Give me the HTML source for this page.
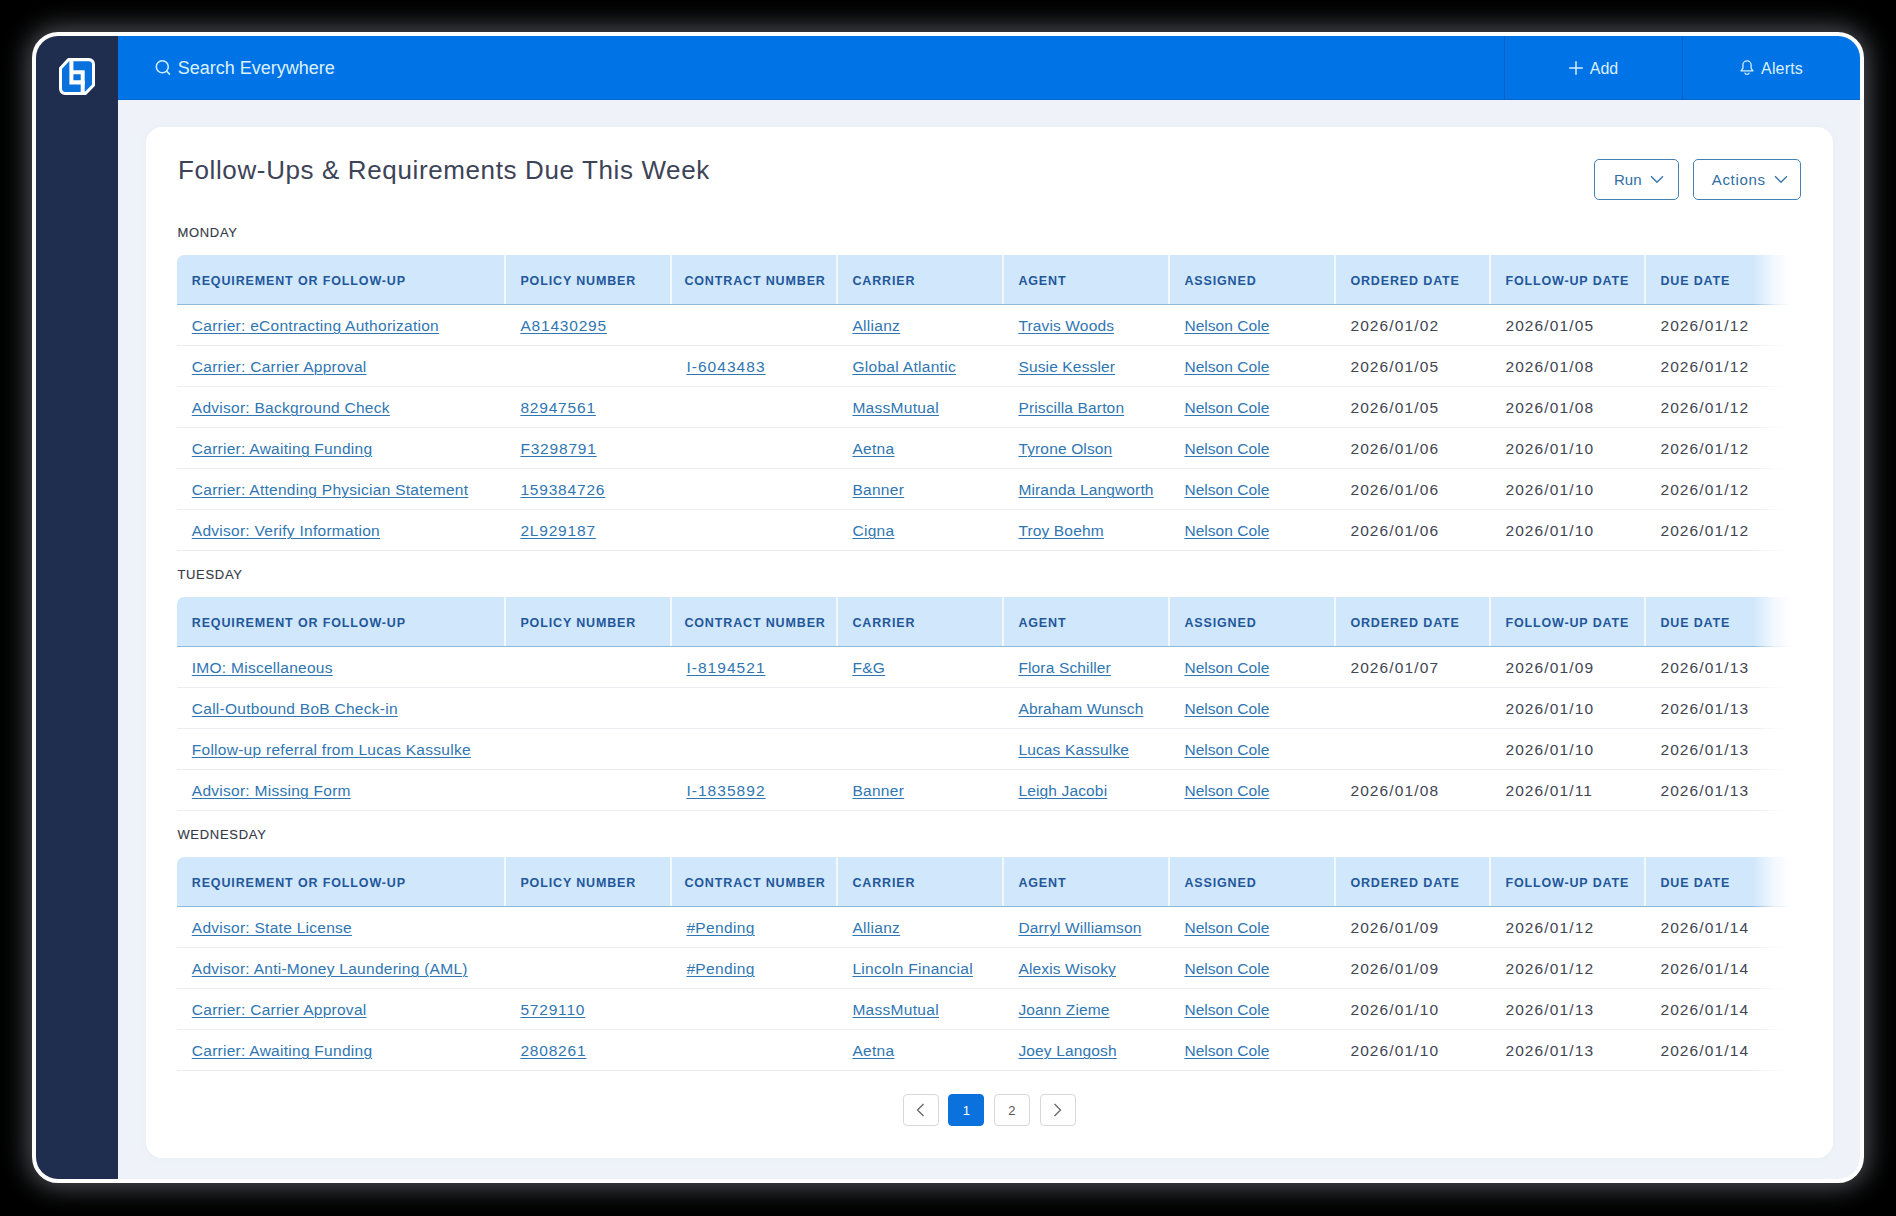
<!DOCTYPE html>
<html lang="en"><head><meta charset="utf-8"><title>Follow-Ups &amp; Requirements Due This Week</title>
<style>
*{box-sizing:border-box;margin:0;padding:0}
html,body{width:1896px;height:1216px;background:#000;overflow:hidden}
body{font-family:"Liberation Sans",sans-serif;position:relative;color:#3b4250}
.frame{position:absolute;left:32px;top:32px;width:1832px;height:1151px;border:4px solid #fff;border-radius:26px;background:#eff3f9;overflow:hidden;}
.glow{position:absolute;left:32px;top:32px;width:1832px;height:1151px;border-radius:26px;box-shadow:0 0 26px 4px rgba(152,160,172,0.52);}
.side{position:absolute;left:0;top:0;width:82px;height:100%;background:#1f2d4e}
.logo{position:absolute;left:21px;top:20.4px;width:40px;height:41px}
.top{position:absolute;left:82px;top:0;right:0;height:63.5px;background:#0073e6;color:#e6f2ff;border-bottom:1.5px solid #0067d0}
.search{position:absolute;left:36.5px;top:0;height:64px;display:flex;align-items:center;font-size:18px;color:#dcf1ff}
.search svg{margin-right:6.3px;position:relative;top:-1px}
.tbtn{position:absolute;top:0;height:64px;border-left:1px solid #0a62c4;display:flex;align-items:center;justify-content:center;font-size:16px;padding-top:1.5px;color:#dcf1ff}
.tbtn svg{margin-right:7px;position:relative;top:-1.2px}
.card{position:absolute;left:110px;top:91px;width:1687px;height:1031px;background:#fff;border-radius:16px;box-shadow:0 0 10px rgba(120,140,180,0.06)}
h1{position:absolute;left:32px;top:24.7px;font-size:26px;letter-spacing:0.62px;font-weight:400;color:#3d4457;line-height:36px;white-space:nowrap}
.btn{position:absolute;top:32px;height:41px;border:1.5px solid #4482b3;border-radius:5px;color:#2f6ea5;font-size:15px;display:flex;align-items:center;justify-content:center;background:#fff}
.btn svg{margin-left:8px}
.btn.b2{letter-spacing:0.7px;padding-left:5.5px}.btn.b1{padding-left:4.5px}
.content{position:absolute;left:31.4px;top:91px;width:1625px}
.day{font-size:13px;letter-spacing:0.7px;color:#343a46;height:46px;line-height:46px;font-weight:400;-webkit-text-stroke:0.12px #343a46;padding-top:0.5px}
.day:first-child{height:37px;line-height:28px}
.tbl{position:relative;width:1625px}
.thead{display:flex;height:50px;background:#d1e7fc;border-bottom:1.5px solid #93b9d9;border-radius:7px 0 0 0;overflow:hidden}
.th{height:100%;display:flex;align-items:center;padding-left:14px;padding-top:3.4px;font-size:12.5px;font-weight:700;letter-spacing:0.86px;color:#22579a;border-left:2px solid #f2f8fe;white-space:nowrap}
.th:first-child{border-left:none;padding-left:14.4px}
.tr{display:flex;height:41px;border-bottom:1px solid #ebedf0}
.td{height:100%;display:flex;align-items:center;padding-left:16px;padding-top:2.5px;font-size:15.5px;color:#3f4552;white-space:nowrap}
.td:first-child{padding-left:14.4px}
.th:first-child{padding-left:14.4px}
.td a{color:#2f76b3;text-decoration:underline;text-underline-offset:2.2px;text-decoration-thickness:1.1px}
.c1{width:327px}.c2,.c3,.c4,.c5,.c6{width:166px}.c7,.c8{width:155px}.c9{width:158px}
.fade{position:absolute;right:0;top:0;bottom:-2px;width:49px;background:linear-gradient(to right,rgba(255,255,255,0),rgba(255,255,255,0.75) 22px,#fff 38px)}
.pager{position:absolute;left:0;right:0;top:967px;height:33px;display:flex;justify-content:center;gap:9.670px;padding-right:0.800px}
.pg{width:36px;height:32px;border:1px solid #d6d8dc;border-radius:4px;display:flex;align-items:center;justify-content:center;font-size:13px;color:#555;background:#fff}
.pg.on{background:#0b72dd;border-color:#0b72dd;color:#fff}

.th.c3{padding-left:12px}
.td.c1{letter-spacing:0.27px}.td.c2{letter-spacing:0.81px}.td.c3{letter-spacing:1.04px}.td.c4{letter-spacing:0.3px}.td.c5{letter-spacing:0.15px}.td.c6{letter-spacing:0.05px}
.td.c7,.td.c8,.td.c9{letter-spacing:1.12px}
.td.c3.pend{letter-spacing:0.36px}

</style></head><body>
<div class="glow"></div>
<div class="frame">
<div class="side">
<svg class="logo" viewBox="0 0 40 40" preserveAspectRatio="none"><path d="M11.500 3.500 H32 a4.500 4.500 0 0 1 4.500 4.500 V28.500 L28.500 36.500 H8 a4.500 4.500 0 0 1 -4.500 -4.500 V12 Z" fill="#0b72dd" stroke="#fff" stroke-width="3" stroke-linejoin="round"/><path d="M14.400 3 V25.700 H27.700" fill="none" stroke="#fff" stroke-width="4"/><path d="M15 15.800 H25.700 V36.500" fill="none" stroke="#fff" stroke-width="4"/></svg>
</div>
<div class="top">
<div class="search"><svg width="17" height="17" viewBox="0 0 17 17" fill="none" stroke="#cdeeff" stroke-width="1.600"><circle cx="7.300" cy="7.800" r="6"/><path d="M11.600 12.100 L15 15.600"/></svg>Search Everywhere</div>
<div class="tbtn" style="left:1386px;width:178px"><svg width="14" height="14" viewBox="0 0 14 14" stroke="#d6f0ff" stroke-width="1.500"><path d="M7 0.200V13.800M0.200 7H13.800"/></svg>Add</div>
<div class="tbtn" style="left:1564px;width:178px;letter-spacing:0.15px"><svg style="top:-1.9px" width="14" height="16" viewBox="0 0 14 16" fill="none" stroke="#d6f0ff" stroke-width="1.300" stroke-linejoin="round"><path d="M1 11.800 L2.900 9.300 V6 a4.100 4.100 0 0 1 8.200 0 V9.300 L13 11.800 Z"/><path d="M4.700 13.600 a2.400 2.400 0 0 0 4.600 0"/></svg>Alerts</div>
</div>
<div class="card">
<h1>Follow-Ups &amp; Requirements Due This Week</h1>
<div class="btn b1" style="left:1448px;width:85px">Run<svg width="14" height="9" viewBox="0 0 14 9" fill="none" stroke="#3a76aa" stroke-width="1.400"><path d="M1 1.200 L7 7.200 L13 1.200"/></svg></div>
<div class="btn b2" style="left:1547px;width:108px">Actions<svg width="14" height="9" viewBox="0 0 14 9" fill="none" stroke="#3a76aa" stroke-width="1.400"><path d="M1 1.200 L7 7.200 L13 1.200"/></svg></div>
<div class="content">
<div class="day">MONDAY</div>
<div class="tbl">
<div class="thead"><div class="th c1"><span>REQUIREMENT OR FOLLOW-UP</span></div><div class="th c2"><span>POLICY NUMBER</span></div><div class="th c3"><span>CONTRACT NUMBER</span></div><div class="th c4"><span>CARRIER</span></div><div class="th c5"><span>AGENT</span></div><div class="th c6"><span>ASSIGNED</span></div><div class="th c7"><span>ORDERED DATE</span></div><div class="th c8"><span>FOLLOW-UP DATE</span></div><div class="th c9"><span>DUE DATE</span></div></div>
<div class="tr"><div class="td c1"><a>Carrier: eContracting Authorization</a></div><div class="td c2"><a>A81430295</a></div><div class="td c3"></div><div class="td c4"><a>Allianz</a></div><div class="td c5"><a>Travis Woods</a></div><div class="td c6"><a>Nelson Cole</a></div><div class="td c7">2026/01/02</div><div class="td c8">2026/01/05</div><div class="td c9">2026/01/12</div></div>
<div class="tr"><div class="td c1"><a>Carrier: Carrier Approval</a></div><div class="td c2"></div><div class="td c3"><a>I-6043483</a></div><div class="td c4"><a>Global Atlantic</a></div><div class="td c5"><a>Susie Kessler</a></div><div class="td c6"><a>Nelson Cole</a></div><div class="td c7">2026/01/05</div><div class="td c8">2026/01/08</div><div class="td c9">2026/01/12</div></div>
<div class="tr"><div class="td c1"><a>Advisor: Background Check</a></div><div class="td c2"><a>82947561</a></div><div class="td c3"></div><div class="td c4"><a>MassMutual</a></div><div class="td c5"><a>Priscilla Barton</a></div><div class="td c6"><a>Nelson Cole</a></div><div class="td c7">2026/01/05</div><div class="td c8">2026/01/08</div><div class="td c9">2026/01/12</div></div>
<div class="tr"><div class="td c1"><a>Carrier: Awaiting Funding</a></div><div class="td c2"><a>F3298791</a></div><div class="td c3"></div><div class="td c4"><a>Aetna</a></div><div class="td c5"><a>Tyrone Olson</a></div><div class="td c6"><a>Nelson Cole</a></div><div class="td c7">2026/01/06</div><div class="td c8">2026/01/10</div><div class="td c9">2026/01/12</div></div>
<div class="tr"><div class="td c1"><a>Carrier: Attending Physician Statement</a></div><div class="td c2"><a>159384726</a></div><div class="td c3"></div><div class="td c4"><a>Banner</a></div><div class="td c5"><a>Miranda Langworth</a></div><div class="td c6"><a>Nelson Cole</a></div><div class="td c7">2026/01/06</div><div class="td c8">2026/01/10</div><div class="td c9">2026/01/12</div></div>
<div class="tr"><div class="td c1"><a>Advisor: Verify Information</a></div><div class="td c2"><a>2L929187</a></div><div class="td c3"></div><div class="td c4"><a>Cigna</a></div><div class="td c5"><a>Troy Boehm</a></div><div class="td c6"><a>Nelson Cole</a></div><div class="td c7">2026/01/06</div><div class="td c8">2026/01/10</div><div class="td c9">2026/01/12</div></div>
<div class="fade"></div></div>
<div class="day">TUESDAY</div>
<div class="tbl">
<div class="thead"><div class="th c1"><span>REQUIREMENT OR FOLLOW-UP</span></div><div class="th c2"><span>POLICY NUMBER</span></div><div class="th c3"><span>CONTRACT NUMBER</span></div><div class="th c4"><span>CARRIER</span></div><div class="th c5"><span>AGENT</span></div><div class="th c6"><span>ASSIGNED</span></div><div class="th c7"><span>ORDERED DATE</span></div><div class="th c8"><span>FOLLOW-UP DATE</span></div><div class="th c9"><span>DUE DATE</span></div></div>
<div class="tr"><div class="td c1"><a>IMO: Miscellaneous</a></div><div class="td c2"></div><div class="td c3"><a>I-8194521</a></div><div class="td c4"><a>F&amp;G</a></div><div class="td c5"><a>Flora Schiller</a></div><div class="td c6"><a>Nelson Cole</a></div><div class="td c7">2026/01/07</div><div class="td c8">2026/01/09</div><div class="td c9">2026/01/13</div></div>
<div class="tr"><div class="td c1"><a>Call-Outbound BoB Check-in</a></div><div class="td c2"></div><div class="td c3"></div><div class="td c4"></div><div class="td c5"><a>Abraham Wunsch</a></div><div class="td c6"><a>Nelson Cole</a></div><div class="td c7"></div><div class="td c8">2026/01/10</div><div class="td c9">2026/01/13</div></div>
<div class="tr"><div class="td c1"><a>Follow-up referral from Lucas Kassulke</a></div><div class="td c2"></div><div class="td c3"></div><div class="td c4"></div><div class="td c5"><a>Lucas Kassulke</a></div><div class="td c6"><a>Nelson Cole</a></div><div class="td c7"></div><div class="td c8">2026/01/10</div><div class="td c9">2026/01/13</div></div>
<div class="tr"><div class="td c1"><a>Advisor: Missing Form</a></div><div class="td c2"></div><div class="td c3"><a>I-1835892</a></div><div class="td c4"><a>Banner</a></div><div class="td c5"><a>Leigh Jacobi</a></div><div class="td c6"><a>Nelson Cole</a></div><div class="td c7">2026/01/08</div><div class="td c8">2026/01/11</div><div class="td c9">2026/01/13</div></div>
<div class="fade"></div></div>
<div class="day">WEDNESDAY</div>
<div class="tbl">
<div class="thead"><div class="th c1"><span>REQUIREMENT OR FOLLOW-UP</span></div><div class="th c2"><span>POLICY NUMBER</span></div><div class="th c3"><span>CONTRACT NUMBER</span></div><div class="th c4"><span>CARRIER</span></div><div class="th c5"><span>AGENT</span></div><div class="th c6"><span>ASSIGNED</span></div><div class="th c7"><span>ORDERED DATE</span></div><div class="th c8"><span>FOLLOW-UP DATE</span></div><div class="th c9"><span>DUE DATE</span></div></div>
<div class="tr"><div class="td c1"><a>Advisor: State License</a></div><div class="td c2"></div><div class="td c3 pend"><a>#Pending</a></div><div class="td c4"><a>Allianz</a></div><div class="td c5"><a>Darryl Williamson</a></div><div class="td c6"><a>Nelson Cole</a></div><div class="td c7">2026/01/09</div><div class="td c8">2026/01/12</div><div class="td c9">2026/01/14</div></div>
<div class="tr"><div class="td c1"><a>Advisor: Anti-Money Laundering (AML)</a></div><div class="td c2"></div><div class="td c3 pend"><a>#Pending</a></div><div class="td c4"><a>Lincoln Financial</a></div><div class="td c5"><a>Alexis Wisoky</a></div><div class="td c6"><a>Nelson Cole</a></div><div class="td c7">2026/01/09</div><div class="td c8">2026/01/12</div><div class="td c9">2026/01/14</div></div>
<div class="tr"><div class="td c1"><a>Carrier: Carrier Approval</a></div><div class="td c2"><a>5729110</a></div><div class="td c3"></div><div class="td c4"><a>MassMutual</a></div><div class="td c5"><a>Joann Zieme</a></div><div class="td c6"><a>Nelson Cole</a></div><div class="td c7">2026/01/10</div><div class="td c8">2026/01/13</div><div class="td c9">2026/01/14</div></div>
<div class="tr"><div class="td c1"><a>Carrier: Awaiting Funding</a></div><div class="td c2"><a>2808261</a></div><div class="td c3"></div><div class="td c4"><a>Aetna</a></div><div class="td c5"><a>Joey Langosh</a></div><div class="td c6"><a>Nelson Cole</a></div><div class="td c7">2026/01/10</div><div class="td c8">2026/01/13</div><div class="td c9">2026/01/14</div></div>
<div class="fade"></div></div>
</div>
<div class="pager">
<div class="pg"><svg width="9" height="14" viewBox="0 0 9 14" fill="none" stroke="#666" stroke-width="1.300"><path d="M7.500 1 L1.500 7 L7.500 13"/></svg></div>
<div class="pg on">1</div>
<div class="pg">2</div>
<div class="pg"><svg width="9" height="14" viewBox="0 0 9 14" fill="none" stroke="#666" stroke-width="1.300"><path d="M1.500 1 L7.500 7 L1.500 13"/></svg></div>
</div>
</div>
</div>

</body></html>
